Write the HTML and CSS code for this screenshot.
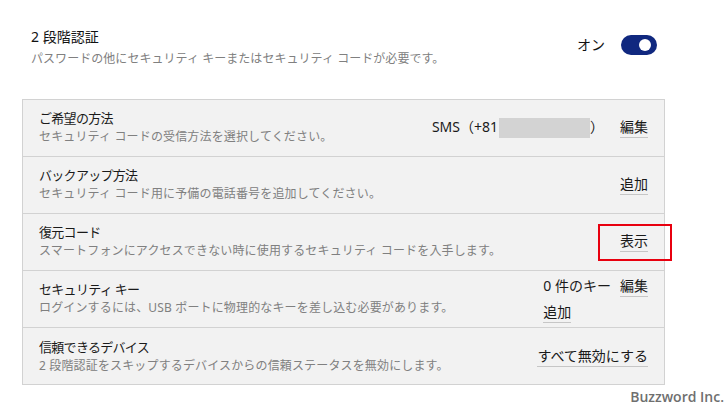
FILE: index.html
```html
<!DOCTYPE html>
<html lang="ja">
<head>
<meta charset="utf-8">
<link rel="stylesheet" href="styles.css">
</head>
<body>
<div class="wrap">
  <div class="header">
    <div class="header-text">
      <div class="h-title">2 段階認証</div>
      <div class="h-sub">パスワードの他にセキュリティ キーまたはセキュリティ コードが必要です。</div>
    </div>
    <div class="toggle-group">
      <span class="toggle-label">オン</span>
      <span class="toggle"><span class="knob"></span></span>
    </div>
  </div>

  <div class="panel">
    <div class="row">
      <div class="info">
        <div class="r-title">ご希望の方法</div>
        <div class="r-desc">セキュリティ コードの受信方法を選択してください。</div>
      </div>
      <div class="actions">
        <span class="value">SMS（+81<span class="blur"></span>）</span>
        <span class="link">編集</span>
      </div>
    </div>
    <div class="row">
      <div class="info">
        <div class="r-title">バックアップ方法</div>
        <div class="r-desc">セキュリティ コード用に予備の電話番号を追加してください。</div>
      </div>
      <div class="actions">
        <span class="link">追加</span>
      </div>
    </div>
    <div class="row">
      <div class="info">
        <div class="r-title">復元コード</div>
        <div class="r-desc">スマートフォンにアクセスできない時に使用するセキュリティ コードを入手します。</div>
      </div>
      <div class="actions">
        <span class="link">表示</span>
      </div>
    </div>
    <div class="row">
      <div class="info">
        <div class="r-title">セキュリティ キー</div>
        <div class="r-desc">ログインするには、USB ポートに物理的なキーを差し込む必要があります。</div>
      </div>
      <div class="key-grid">
        <span class="value">0 件のキー</span>
        <span class="link">編集</span>
        <span class="link">追加</span>
      </div>
    </div>
    <div class="row">
      <div class="info">
        <div class="r-title">信頼できるデバイス</div>
        <div class="r-desc">2 段階認証をスキップするデバイスからの信頼ステータスを無効にします。</div>
      </div>
      <div class="actions">
        <span class="link">すべて無効にする</span>
      </div>
    </div>
  </div>
</div>
<div class="highlight"></div>
<div class="brand">Buzzword Inc.</div>
</body>
</html>
```
FILE: styles.css
```css
* { box-sizing: border-box; }
html, body { margin: 0; padding: 0; background: #ffffff; }
body {
  width: 728px;
  height: 408px;
  position: relative;
  overflow: hidden;
  font-family: "Noto Sans", "Noto Sans CJK JP", sans-serif;
  color: #1a1a1a;
}
.wrap {
  margin-left: 22px;
  width: 643px;
  padding-top: 27px;
}
.header {
  display: flex;
  justify-content: space-between;
  align-items: flex-start;
  padding: 0 8px 0 9px;
}
.h-title {
  font-size: 14px;
  line-height: 20px;
  color: #111;
}
.h-sub {
  margin-top: 3px;
  font-size: 12px;
  line-height: 18px;
  color: #808080;
  letter-spacing: 0.05px;
}
.toggle-group {
  display: flex;
  align-items: center;
  gap: 16px;
  margin-top: 8px;
}
.toggle-label {
  font-size: 14px;
  line-height: 20px;
  color: #111;
}
.toggle {
  width: 36px;
  height: 20px;
  border-radius: 10px;
  background: #10287f;
  display: flex;
  align-items: center;
  justify-content: flex-end;
  padding-right: 6px;
}
.knob {
  width: 12px;
  height: 12px;
  border-radius: 50%;
  background: #ffffff;
}
.panel {
  margin-top: 31px;
  border: 1px solid #d2d2d2;
  background: #f2f2f2;
}
.row {
  height: 57px;
  display: flex;
  align-items: center;
  justify-content: space-between;
  padding: 0 16px 1px 16px;
  border-bottom: 1px solid #d2d2d2;
}
.row:last-child {
  height: 56px;
  border-bottom: none;
  padding-bottom: 0;
}
.info {
  display: flex;
  flex-direction: column;
  gap: 1px;
}
.r-title {
  font-size: 13px;
  line-height: 18px;
  color: #1a1a1a;
  letter-spacing: -0.7px;
}
.r-desc {
  font-size: 12px;
  line-height: 18px;
  color: #808080;
  letter-spacing: 0.15px;
}
.actions {
  display: flex;
  align-items: center;
  gap: 16px;
  font-size: 14px;
  line-height: 20px;
}
.value {
  font-size: 14px;
  line-height: 20px;
  color: #1a1a1a;
  white-space: nowrap;
}
.blur {
  display: inline-block;
  width: 91px;
  height: 20px;
  background: #d3d3d3;
  vertical-align: middle;
  margin: -2px 0 0 1px;
}
.link {
  display: inline-block;
  font-size: 14px;
  line-height: 20px;
  color: #1a1a1a;
  border-bottom: 1px solid #c6c6c6;
  white-space: nowrap;
}
.key-grid {
  display: grid;
  grid-template-columns: auto auto;
  column-gap: 9px;
  row-gap: 5px;
  align-items: start;
  justify-items: start;
  margin-top: 2px;
}
.highlight {
  position: absolute;
  left: 598px;
  top: 224px;
  width: 74px;
  height: 37px;
  border: 2px solid #e8000f;
}
.brand {
  position: absolute;
  right: 4px;
  top: 387px;
  font-family: "Open Sans", "Noto Sans", sans-serif;
  font-weight: 600;
  font-size: 14px;
  line-height: 20px;
  color: #6f6f6f;
}
```
